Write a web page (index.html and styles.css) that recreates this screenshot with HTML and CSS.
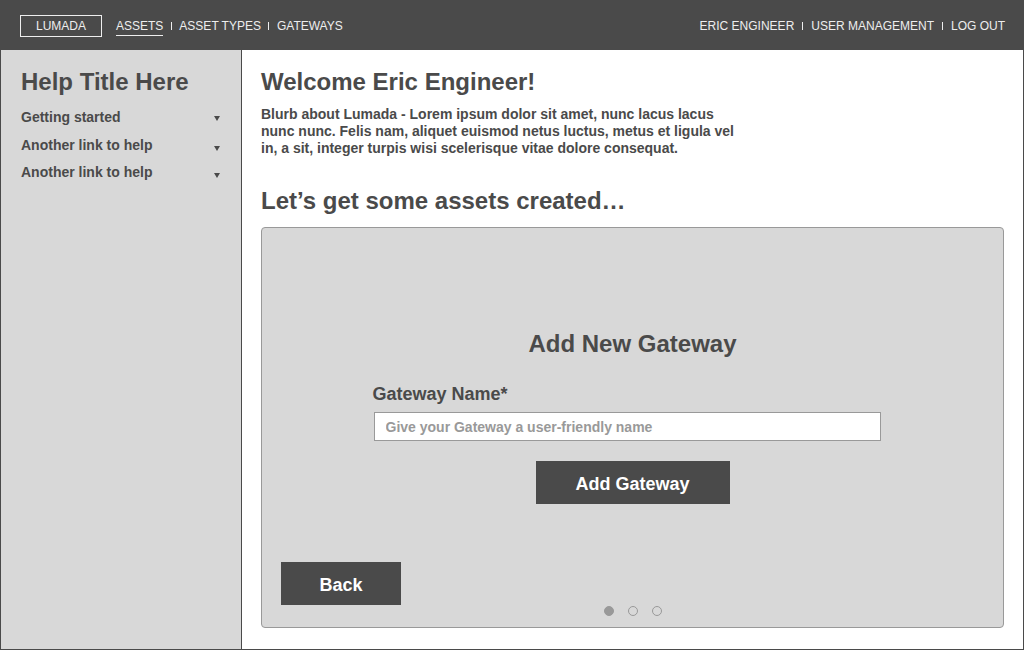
FILE: index.html
```html
<!DOCTYPE html>
<html lang="en">
<head>
    <meta charset="UTF-8">
    <meta name="viewport" content="width=device-width, initial-scale=1.0">
    <title>Lumada - Add New Gateway</title>
    <link rel="stylesheet" href="styles.css">
</head>
<body>
    <div class="app">
        <header class="topbar">
            <nav class="nav">
                <span class="logo">LUMADA</span>
                <a class="nav-link active">ASSETS</a>
                <span class="sep"></span>
                <a class="nav-link">ASSET TYPES</a>
                <span class="sep"></span>
                <a class="nav-link">GATEWAYS</a>
            </nav>
            <nav class="nav">
                <a class="nav-link">ERIC ENGINEER</a>
                <span class="sep"></span>
                <a class="nav-link">USER MANAGEMENT</a>
                <span class="sep"></span>
                <a class="nav-link">LOG OUT</a>
            </nav>
        </header>

        <div class="body">
            <aside class="help">
                <h2>Help Title Here</h2>
                <ul class="help-links">
                    <li><span>Getting started</span><i class="caret"></i></li>
                    <li><span>Another link to help</span><i class="caret low"></i></li>
                    <li><span>Another link to help</span><i class="caret low"></i></li>
                </ul>
            </aside>

            <main class="main">
                <h1>Welcome Eric Engineer!</h1>
                <p class="blurb">Blurb about Lumada - Lorem ipsum dolor sit amet, nunc lacus lacus nunc nunc. Felis nam, aliquet euismod netus luctus, metus et ligula vel in, a sit, integer turpis wisi scelerisque vitae dolore consequat.</p>
                <h1 class="subtitle">Let’s get some assets created…</h1>

                <section class="card">
                    <form class="gateway-form" onsubmit="return false">
                        <h3>Add New Gateway</h3>
                        <label for="gatewayName">Gateway Name*</label>
                        <input type="text" id="gatewayName" placeholder="Give your Gateway a user-friendly name">
                        <button class="btn btn-add">Add Gateway</button>
                    </form>
                    <div class="card-footer">
                        <button class="btn btn-back">Back</button>
                        <div class="dots">
                            <span class="dot on"></span>
                            <span class="dot"></span>
                            <span class="dot"></span>
                        </div>
                    </div>
                </section>
            </main>
        </div>
    </div>
</body>
</html>
```

FILE: styles.css
```css
* { box-sizing: border-box; }
body { margin: 0; background: #fff; font-family: "Liberation Sans", Arial, sans-serif; color: #4a4a4a; }

.app { width: 1024px; height: 650px; border: 1px solid #4a4a4a; display: flex; flex-direction: column; }

/* top bar */
.topbar { height: 49px; flex: none; background: #4a4a4a; display: flex; justify-content: space-between; align-items: center; padding: 0 18px 0 19px; }
.nav { display: flex; align-items: center; font-size: 12px; line-height: 14px; color: #eee; }
.logo { width: 82px; height: 22px; border: 1px solid #eee; padding: 3px 0; text-align: center; margin-right: 14px; }
.nav-link { padding: 3px 0 2px; border-bottom: 1px solid transparent; cursor: pointer; }
.nav-link.active { border-bottom-color: #eee; }
.sep { width: 1px; height: 8px; background: #eee; margin: 0 7.5px; }
.nav + .nav .sep { margin: 0 8px; }

.body { flex: 1; display: flex; min-height: 0; }

/* help sidebar */
.help { width: 241px; flex: none; background: #d8d8d8; border-right: 1px solid #4a4a4a; padding: 18px 20px 0; }
.help h2 { margin: 0 0 11px; font-size: 24px; line-height: 28px; }
.help-links { list-style: none; margin: 0; padding: 0; }
.help-links li { display: flex; justify-content: space-between; align-items: center; font-size: 14px; font-weight: bold; line-height: 20px; margin-bottom: 7.5px; }
.caret { width: 0; height: 0; border-left: 3px solid transparent; border-right: 3px solid transparent; border-top: 5px solid #4a4a4a; margin: 2px 1px 0 0; }
.caret.low { margin-top: 7px; }

/* main area */
.main { flex: 1; padding: 18px 19px 21px; display: flex; flex-direction: column; }
.main h1 { margin: 0 0 10px; font-size: 24px; line-height: 28px; }
.blurb { margin: 0 0 30px; max-width: 485px; font-size: 14px; font-weight: bold; line-height: 17px; }
.main h1.subtitle { margin-bottom: 12px; }

.card { flex: 1; background: #d8d8d8; border: 1px solid #999; border-radius: 4px; display: flex; flex-direction: column; justify-content: space-between; padding: 102px 19px 11px; }
.gateway-form { width: 520px; margin: 0 auto; display: flex; flex-direction: column; }
.gateway-form h3 { margin: 0 0 25px; font-size: 24px; line-height: 28px; text-align: center; }
.gateway-form label { font-size: 18px; font-weight: bold; line-height: 22px; margin-bottom: 7px; }
.gateway-form input { width: 507px; height: 29px; margin-left: 1px; border: 1px solid #999; background: #fff; padding: 0 11px; font-family: inherit; font-size: 14px; font-weight: bold; color: #4a4a4a; }
.gateway-form input::placeholder { color: #999; }

.btn { border: none; background: #4a4a4a; color: #fff; font-family: inherit; font-size: 18px; font-weight: bold; height: 43px; padding: 3px 0 0; cursor: pointer; }
.btn-add { width: 194px; margin: 20px auto 0; }

.card-footer { display: grid; grid-template-columns: 1fr auto 1fr; align-items: end; }
.btn-back { width: 120px; margin-bottom: 11px; }
.dots { display: flex; gap: 14px; }
.dot { width: 10px; height: 10px; border-radius: 50%; border: 1px solid #999; }
.dot.on { background: #999; }
```
